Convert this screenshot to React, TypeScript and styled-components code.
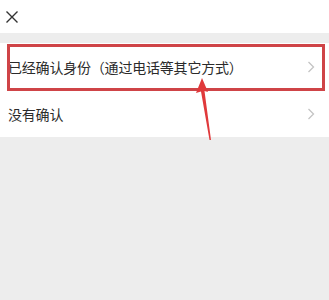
import React from "react";
import styled, { createGlobalStyle } from "styled-components";

const Global = createGlobalStyle`
  html, body { margin: 0; padding: 0; background: #ededed; }
  body { font-family: "Noto Sans CJK SC", "Noto Sans", sans-serif; }
`;

const Page = styled.div`
  position: relative;
  width: 329px;
  height: 300px;
  background: #ededed;
  overflow: hidden;
`;

const Header = styled.div`
  height: 33px;
  background: #ffffff;
  display: flex;
  align-items: center;
  padding-left: 4px;
`;

const CloseBtn = styled.div`
  width: 16px;
  height: 16px;
  display: flex;
  align-items: center;
  justify-content: center;
`;

const List = styled.div`
  margin-top: 10px;
  background: #ffffff;
  display: flex;
  flex-direction: column;
`;

const Row = styled.div<{ $h: number }>`
  height: ${(p) => p.$h}px;
  display: flex;
  align-items: center;
  justify-content: space-between;
  padding: 0 14px 0 8px;
  font-size: 14px;
  color: #2b2b2b;
  letter-spacing: -0.2px;
`;

const Highlight = styled.div`
  position: absolute;
  left: 7px;
  top: 44px;
  width: 318px;
  height: 47px;
  box-sizing: border-box;
  border: 3px solid #cf4447;
  pointer-events: none;
`;

const Arrow = styled.svg`
  position: absolute;
  left: 190px;
  top: 74px;
`;

const Chevron = () => (
  <svg width="8" height="12" viewBox="0 0 8 12">
    <path d="M1.5 1 L6.5 6 L1.5 11" fill="none" stroke="#c4c4c4" strokeWidth="1.3" />
  </svg>
);

export default function App() {
  return (
    <>
      <Global />
      <Page>
        <Header>
          <CloseBtn>
            <svg width="14" height="14" viewBox="0 0 14 14">
              <path d="M1.5 1.5 L12.5 12.5 M12.5 1.5 L1.5 12.5" stroke="#333" strokeWidth="1.4" />
            </svg>
          </CloseBtn>
        </Header>
        <List>
          <Row $h={47}>
            <span>已经确认身份（通过电话等其它方式）</span>
            <Chevron />
          </Row>
          <Row $h={47}>
            <span>没有确认</span>
            <Chevron />
          </Row>
        </List>
        <Highlight />
        <Arrow width="30" height="70" viewBox="0 0 30 70">
          <path d="M12 4 L18 18 L14.5 17 L21 66 L19.5 66 L11 17.5 L6 19 Z" fill="#e0393b" />
        </Arrow>
      </Page>
    </>
  );
}
